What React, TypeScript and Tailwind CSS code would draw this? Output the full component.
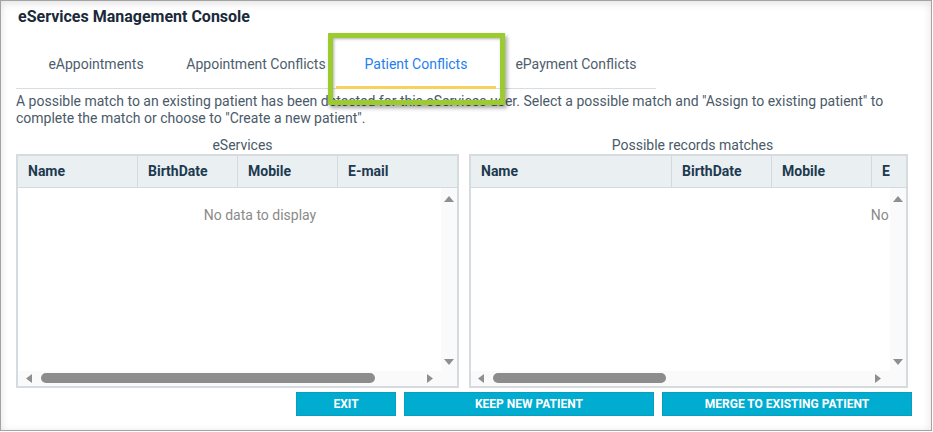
import React from "react";

type Col = { label: string; w: number };

function TriUp() {
  return (
    <svg width="10" height="6" viewBox="0 0 10 6"><path d="M5 0 L10 6 L0 6 Z" fill="#8f8f8f" /></svg>
  );
}
function TriDown() {
  return (
    <svg width="10" height="6" viewBox="0 0 10 6"><path d="M0 0 L10 0 L5 6 Z" fill="#8f8f8f" /></svg>
  );
}
function TriLeft() {
  return (
    <svg width="6" height="9" viewBox="0 0 6 9"><path d="M6 0 L6 9 L0 4.5 Z" fill="#8f8f8f" /></svg>
  );
}
function TriRight() {
  return (
    <svg width="6" height="9" viewBox="0 0 6 9"><path d="M0 0 L6 4.5 L0 9 Z" fill="#8f8f8f" /></svg>
  );
}

function Grid({
  width,
  cols,
  contentW,
  thumbLeft,
  thumbW,
  leftArrowX,
  rightArrowX,
}: {
  width: number;
  cols: Col[];
  contentW: number;
  thumbLeft: number;
  thumbW: number;
  leftArrowX: number;
  rightArrowX: number;
}) {
  return (
    <div
      className="h-[234px] border-2 border-[#d6dbdf] flex flex-col bg-white"
      style={{ width }}
    >
      {/* header */}
      <div className="h-[32px] flex bg-[#eaeff2] border-b border-[#d3d9de] shrink-0">
        <div className="flex-1 overflow-hidden flex">
          {cols.map((c, i) => (
            <div
              key={i}
              className="shrink-0 h-full flex items-center pl-[10px] border-r border-[#d3d9de] text-[14px] font-bold text-[#1d3a4f] whitespace-nowrap"
              style={{ width: c.w }}
            >
              {c.label}
            </div>
          ))}
        </div>
        <div className="w-[16px] shrink-0" />
      </div>
      {/* body */}
      <div className="flex-1 flex min-h-0">
        <div className="flex-1 overflow-hidden">
          <div
            className="pt-[19px] text-center text-[14px] leading-[17px] text-[#8a8a8a] whitespace-nowrap"
            style={{ width: contentW }}
          >
            No data to display
          </div>
        </div>
        <div className="w-[16px] shrink-0 bg-[#fafafa] flex flex-col items-center justify-between pt-[8px] pb-[6px]">
          <TriUp />
          <TriDown />
        </div>
      </div>
      {/* horizontal scrollbar */}
      <div className="h-[15px] shrink-0 flex">
        <div className="flex-1 bg-[#fafafa] relative">
          <div className="absolute top-[3px]" style={{ left: leftArrowX }}>
            <TriLeft />
          </div>
          <div
            className="absolute top-[2px] h-[10px] rounded-full bg-[#8c8c8c]"
            style={{ left: thumbLeft, width: thumbW }}
          />
          <div className="absolute top-[3px]" style={{ left: rightArrowX }}>
            <TriRight />
          </div>
        </div>
        <div className="w-[16px] shrink-0 bg-[#fafafa]" />
      </div>
    </div>
  );
}

export default function App() {
  const tabs = ["eAppointments", "Appointment Conflicts", "Patient Conflicts", "ePayment Conflicts"];
  return (
    <div className="w-[933px] h-[432px] bg-white font-[Roboto,sans-serif]">
      <div className="relative w-[932px] h-[431px] border border-[#a3a3a3] shadow-[inset_0_2px_8px_rgba(0,0,0,0.12)] bg-white flex flex-col">
        {/* title */}
        <div className="ml-[17px] pt-[6px] leading-[20px] text-[16px] font-bold text-[#1a2a3a]">
          eServices Management Console
        </div>

        {/* tabs */}
        <div className="ml-[15px] mt-[14px] w-[640px] h-[48px] flex border-b border-[#dadde0]">
          {tabs.map((t, i) => (
            <div
              key={t}
              className={
                "relative w-[160px] h-full flex items-center justify-center text-[14px] whitespace-nowrap " +
                (i === 2 ? "text-[#1f7ff0]" : "text-[#4e5d6c]")
              }
            >
              {t}
              {i === 2 && (
                <div className="absolute left-0 right-0 bottom-[-1px] h-[3px] bg-[#f6d35e]" />
              )}
            </div>
          ))}
        </div>

        {/* description */}
        <div className="ml-[15px] mt-[4px] text-[14px] leading-[17px] text-[#4a5a69] whitespace-nowrap">
          A possible match to an existing patient has been detected for this eServices user. Select a possible match and "Assign to existing patient" to
          <br />
          complete the match or choose to "Create a new patient".
        </div>

        {/* labels */}
        <div className="ml-[15px] mt-[10px] flex gap-[10px] text-[14px] leading-[17px] text-[#4a5a69]">
          <div className="w-[443px] text-center pl-[10px]">eServices</div>
          <div className="w-[439px] text-center pl-[8px]">Possible records matches</div>
        </div>

        {/* grids */}
        <div className="ml-[15px] flex gap-[10px]">
          <Grid
            width={443}
            cols={[
              { label: "Name", w: 120 },
              { label: "BirthDate", w: 100 },
              { label: "Mobile", w: 100 },
              { label: "E-mail", w: 160 },
            ]}
            contentW={484}
            thumbLeft={23}
            thumbW={334}
            leftArrowX={8}
            rightArrowX={409}
          />
          <Grid
            width={439}
            cols={[
              { label: "Name", w: 201 },
              { label: "BirthDate", w: 100 },
              { label: "Mobile", w: 100 },
              { label: "E-mail", w: 200 },
            ]}
            contentW={912}
            thumbLeft={22}
            thumbW={173}
            leftArrowX={7}
            rightArrowX={404}
          />
        </div>

        {/* buttons */}
        <div className="mt-[4px] flex justify-end pr-[19px] gap-[8px]">
          <button className="w-[100px] h-[24px] bg-[#00acd0] border border-[#0a9dbd] text-white text-[12px] font-bold">
            EXIT
          </button>
          <button className="w-[250px] h-[24px] bg-[#00acd0] border border-[#0a9dbd] text-white text-[12px] font-bold">
            KEEP NEW PATIENT
          </button>
          <button className="w-[250px] h-[24px] bg-[#00acd0] border border-[#0a9dbd] text-white text-[12px] font-bold">
            MERGE TO EXISTING PATIENT
          </button>
        </div>

        {/* green highlight overlay */}
        <div className="absolute left-[327px] top-[32px] w-[177px] h-[72px] border-[5px] border-[#9bcb2f] shadow-[2px_3px_4px_rgba(0,0,0,0.35),inset_1px_1px_3px_rgba(0,0,0,0.3)]" />
      </div>
    </div>
  );
}
